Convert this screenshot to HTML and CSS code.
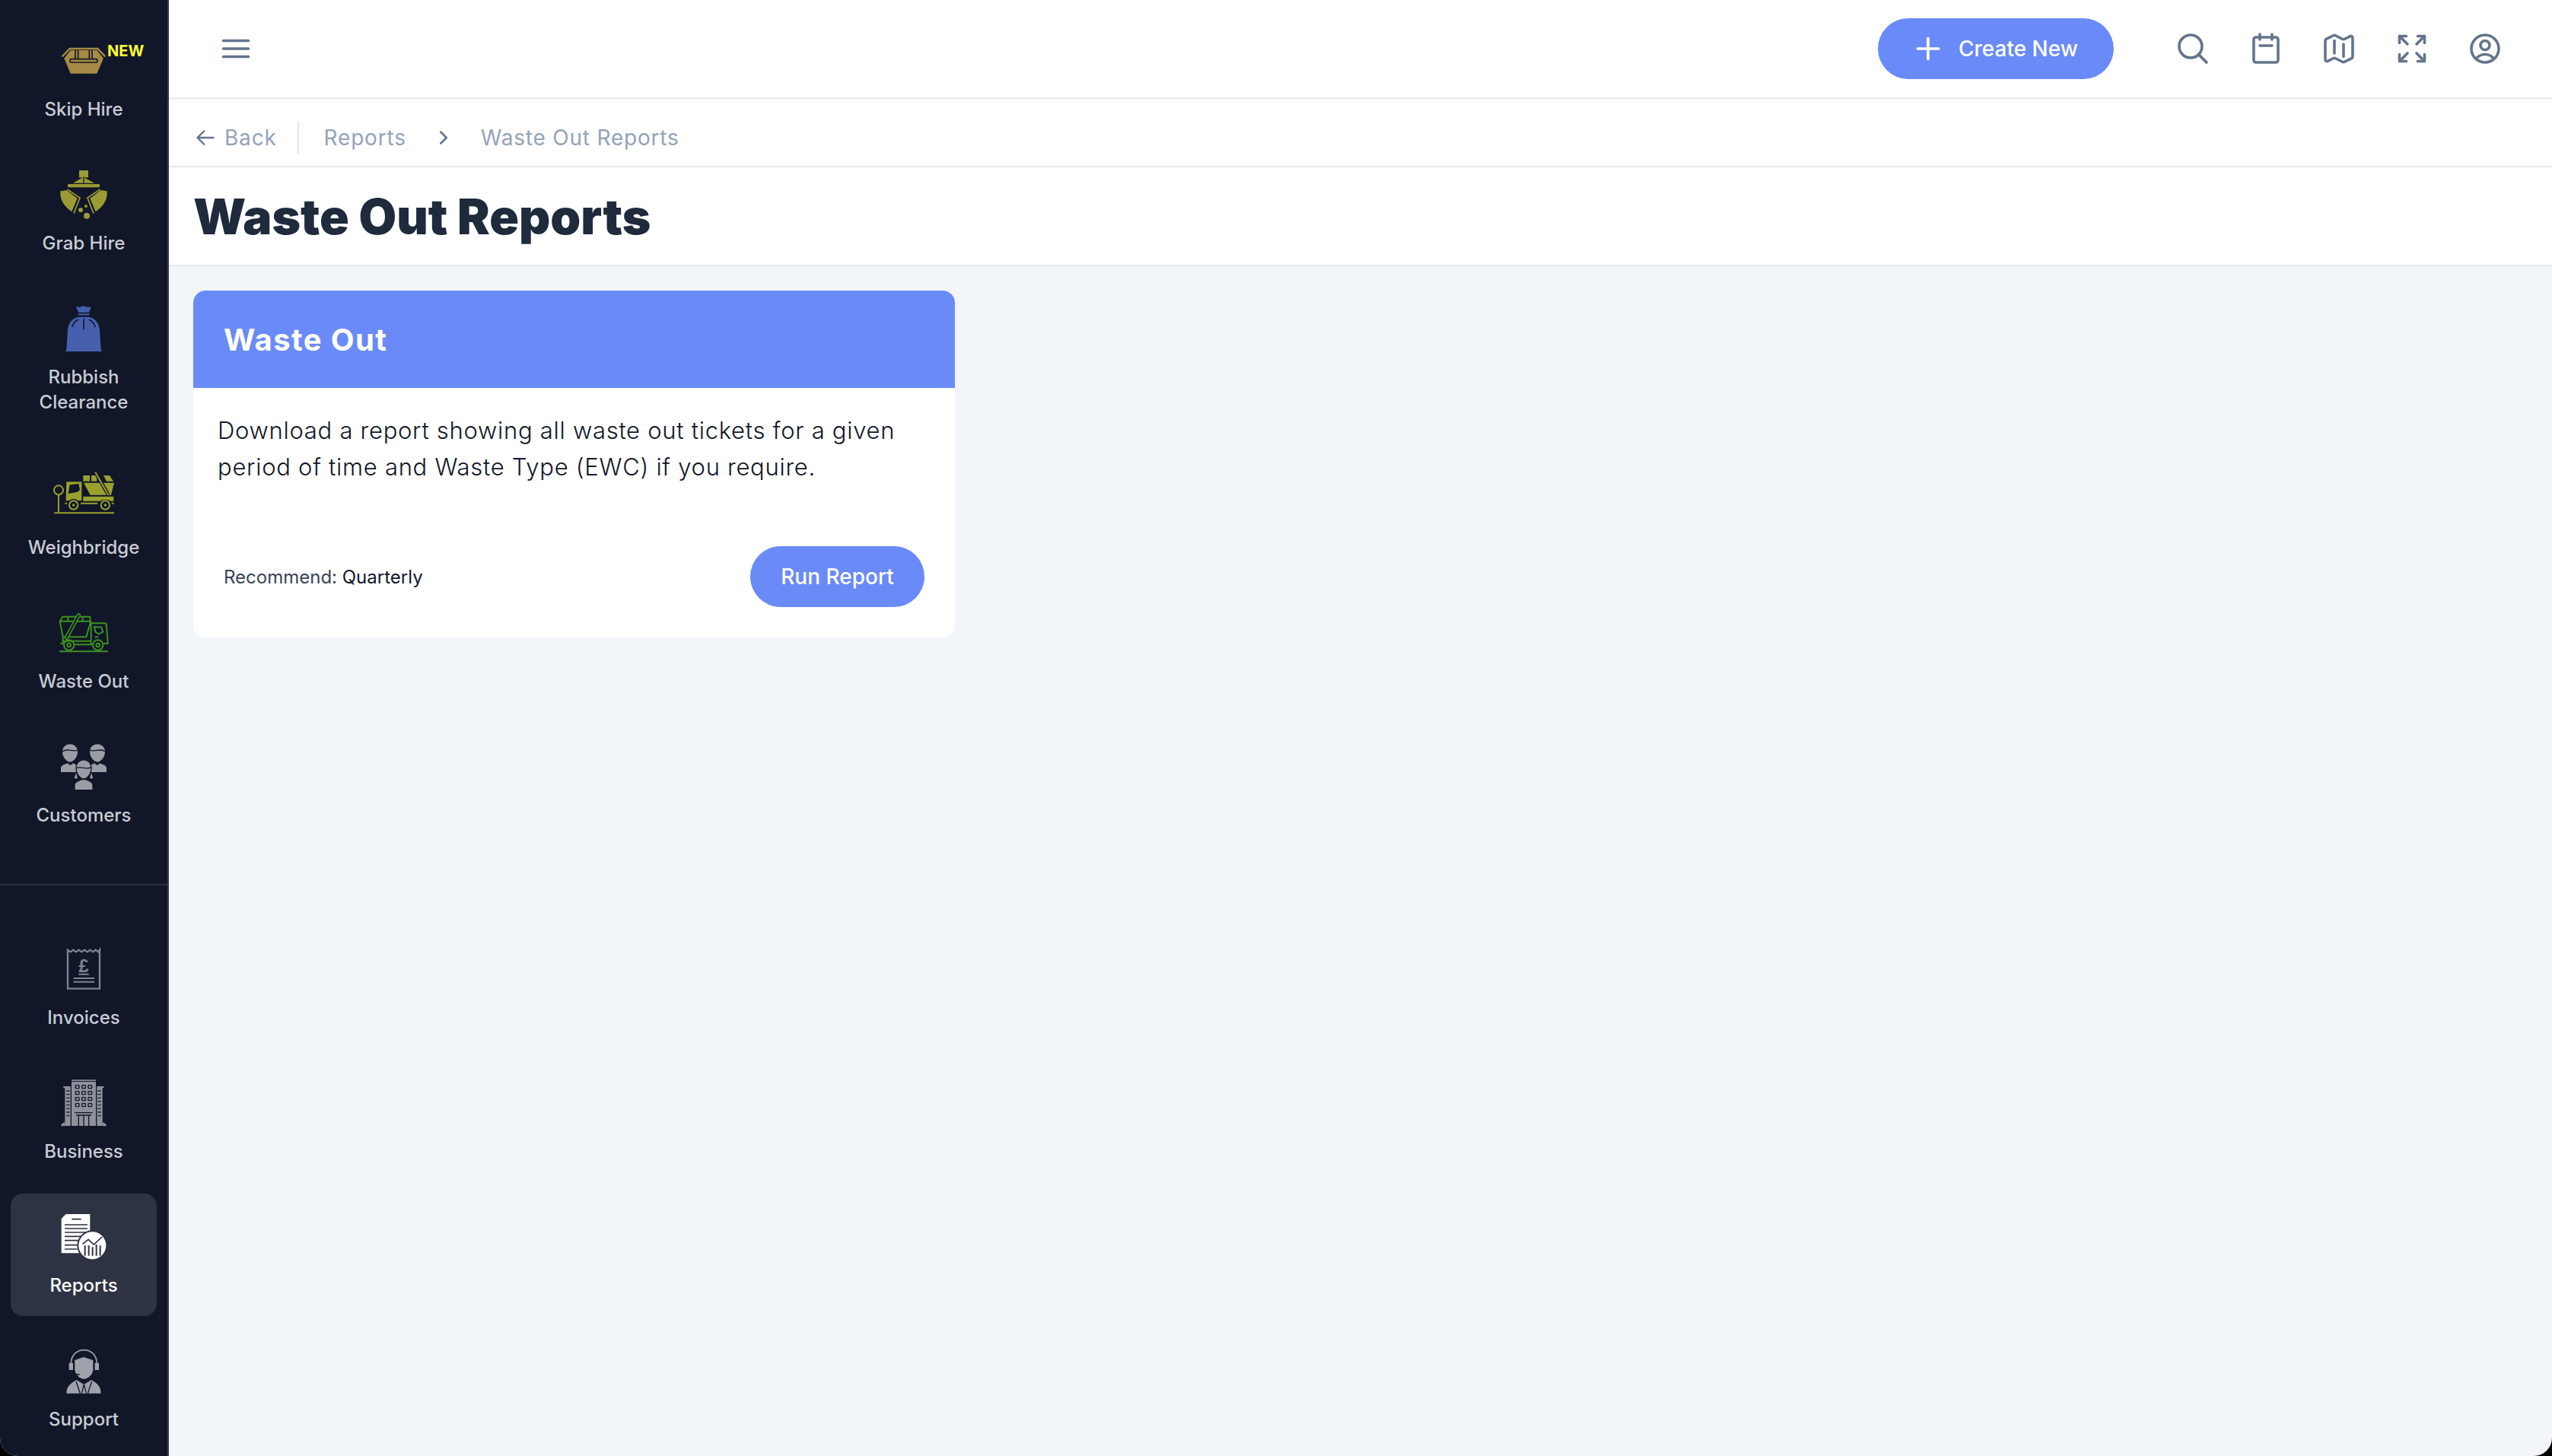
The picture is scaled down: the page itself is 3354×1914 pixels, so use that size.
FILE: index.html
```html
<!DOCTYPE html>
<html lang="en">
<head>
    <meta charset="UTF-8">
    <meta name="viewport" content="width=device-width, initial-scale=1.0">
    <title>Waste Out Reports</title>
    <link rel="stylesheet" href="styles.css">
</head>
<body>
    <div class="app">
        <aside class="sidebar">
            <nav class="nav-group nav-main">
                <a class="nav-item">
                    <span class="nav-badge">NEW</span>
                    <svg class="nav-icon" viewBox="60 18 240 264">
                        <path d="M95 133 L125 102 H235 L265 133" fill="none" stroke="#a68a45" stroke-width="7"/>
                        <path d="M128 108 H232 L258 140 L232 200 H128 L103 140 Z" fill="#a68a45"/>
                        <path d="M147 108 V142 M158 108 V142 M202 108 V142 M213 108 V142" stroke="#111729" stroke-width="5"/>
                        <rect x="126" y="143" width="108" height="13" rx="5" fill="#a68a45" stroke="#111729" stroke-width="5"/>
                    </svg>
                    <span class="nav-label">Skip Hire</span>
                </a>
                <a class="nav-item">
                    <svg class="nav-icon" viewBox="60 6 240 264">
                        <g fill="#9c9a34">
                            <rect x="162" y="42" width="36" height="28"/>
                            <path d="M138 92 L178 68 L222 92 Z"/>
                            <rect x="117" y="96" width="126" height="13" rx="4"/>
                            <path d="M88 124 L112 120 L155 152 L133 205 C105 185 85 160 88 124 Z"/>
                            <path d="M272 124 L248 120 L205 152 L227 205 C255 185 275 160 272 124 Z"/>
                            <circle cx="168" cy="198" r="9"/>
                            <circle cx="189" cy="183" r="6"/>
                            <circle cx="192" cy="221" r="12"/>
                        </g>
                        <path d="M180 68 V92" stroke="#111729" stroke-width="4"/>
                        <path d="M115 117 L165 150 L141 212 M245 117 L195 150 L219 212" fill="none" stroke="#9c9a34" stroke-width="5"/>
                    </svg>
                    <span class="nav-label">Grab Hire</span>
                </a>
                <a class="nav-item nav-item-tall">
                    <svg class="nav-icon" viewBox="60 -6 240 264">
                        <path d="M150 40 C160 42 170 42 178 36 C190 42 200 42 208 38 L206 50 L200 62 H160 L154 50 Z" fill="#4760ae"/>
                        <rect x="158" y="67" width="44" height="6" fill="#4760ae"/>
                        <path d="M160 80 H200 C225 84 240 104 243 130 L248 210 L252 216 H108 L112 210 L117 130 C120 104 135 84 160 80 Z" fill="#4760ae"/>
                        <path d="M180 88 V130 M160 90 C146 96 138 106 134 120 M200 90 C214 96 222 106 226 120" fill="none" stroke="#111729" stroke-width="5"/>
                    </svg>
                    <span class="nav-label">Rubbish<br>Clearance</span>
                </a>
                <a class="nav-item">
                    <svg class="nav-icon" viewBox="60 6 240 264">
                        <g fill="none" stroke="#9aa02c" stroke-width="6">
                            <circle cx="81" cy="103" r="18"/>
                            <path d="M81 121 V192 M64 193 H300 M168 155 H235"/>
                            <circle cx="140" cy="162" r="17"/>
                            <circle cx="265" cy="162" r="17"/>
                        </g>
                        <g fill="#9aa02c">
                            <circle cx="140" cy="162" r="5"/>
                            <circle cx="265" cy="162" r="5"/>
                            <rect x="106" y="152" width="8" height="6"/>
                            <rect x="290" y="152" width="9" height="6"/>
                            <path d="M112 70 H172 V144 H156 C150 136 130 136 124 144 H110 Z"/>
                            <rect x="178" y="45" width="26" height="23"/>
                            <rect x="210" y="45" width="22" height="23"/>
                            <path d="M258 45 H282 L297 68 H270 Z"/>
                            <path d="M180 74 H300 L288 122 H206 Z"/>
                            <path d="M178 128 H298 V146 H285 C278 138 252 138 245 146 H178 Z"/>
                        </g>
                        <path d="M125 82 L160 78 L165 102 L155 110 L119 117 Z" fill="#111729"/>
                        <path d="M226 32 L277 122" stroke="#111729" stroke-width="14"/>
                        <path d="M226 32 L277 122" stroke="#9aa02c" stroke-width="6"/>
                    </svg>
                    <span class="nav-label">Weighbridge</span>
                </a>
                <a class="nav-item">
                    <svg class="nav-icon" viewBox="60 -6 240 264">
                        <g fill="none" stroke="#3f8f1f" stroke-width="6">
                            <path d="M86 80 L97 62 H205 V78 M86 80 L98 142 H190 L208 80 Z"/>
                            <path d="M118 62 V80 M176 62 V80"/>
                            <path d="M206 88 H262 C268 88 270 92 270 98 L275 168 H256 M98 142 V172 M88 168 H100 M142 172 H216 M100 158 H210 M209 88 V172"/>
                            <path d="M222 102 L250 104 L256 122 L240 130 L226 122 Z"/>
                            <path d="M224 142 H238"/>
                            <circle cx="122" cy="174" r="20"/>
                            <circle cx="236" cy="174" r="20"/>
                            <circle cx="122" cy="174" r="7"/>
                            <circle cx="236" cy="174" r="7"/>
                            <path d="M84 199 H276"/>
                        </g>
                        <path d="M112 145 L160 56" stroke="#3f8f1f" stroke-width="16" stroke-linecap="round"/>
                        <path d="M112 145 L160 56" stroke="#111729" stroke-width="6" stroke-linecap="round"/>
                    </svg>
                    <span class="nav-label">Waste Out</span>
                </a>
                <a class="nav-item">
                    <svg class="nav-icon" viewBox="60 12 240 264">
                        <g fill="#9a9ca6">
                            <path d="M96 85 C96 45 156 45 156 85 C156 105 140 125 126 125 C112 125 96 105 96 85 Z"/>
                            <path d="M204 85 C204 45 264 45 264 85 C264 105 248 125 234 125 C220 125 204 105 204 85 Z"/>
                            <path d="M90 165 V150 C90 138 106 134 118 130 C122 140 132 140 136 130 L160 140 V165 Z"/>
                            <path d="M270 165 V150 C270 138 254 134 242 130 C238 140 228 140 224 130 L200 140 V165 Z"/>
                        </g>
                        <path d="M95 84 C115 68 135 88 157 78 M203 78 C225 88 245 68 265 84" fill="none" stroke="#111729" stroke-width="4"/>
                        <path d="M144 236 V215 C144 203 162 199 170 194 H190 C198 199 216 203 216 215 V236 Z" fill="#9a9ca6" stroke="#111729" stroke-width="4"/>
                        <path d="M150 150 C150 105 210 105 210 150 C210 172 194 192 180 192 C166 192 150 172 150 150 Z" fill="#9a9ca6" stroke="#111729" stroke-width="4"/>
                        <path d="M150 150 C168 138 190 158 210 146" fill="none" stroke="#111729" stroke-width="4"/>
                        <path d="M150 168 L143 190 H156 Z M210 168 L217 190 H204 Z" fill="#9a9ca6"/>
                    </svg>
                    <span class="nav-label">Customers</span>
                </a>
            </nav>
            <nav class="nav-group nav-lower">
                <a class="nav-item">
                    <svg class="nav-icon" viewBox="60 -30 240 264">
                        <path d="M117 26 L128 34 L139 26 L150 34 L161 26 L172 34 L183 26 L194 34 L205 26 L216 34 L227 26 L238 34 L243 26 V179 H117 Z" fill="none" stroke="#7f8290" stroke-width="7"/>
                        <text class="invoice-sign" x="180" y="114" text-anchor="middle">£</text>
                        <path d="M160 122 H200 M140 138 H222 M140 152 H222" stroke="#7f8290" stroke-width="6"/>
                    </svg>
                    <span class="nav-label">Invoices</span>
                </a>
                <a class="nav-item">
                    <svg class="nav-icon" viewBox="60 -12 240 264">
                        <g fill="#8e919b">
                            <rect x="132" y="28" width="96" height="5"/>
                            <rect x="100" y="54" width="160" height="6"/>
                            <rect x="106" y="60" width="148" height="150"/>
                            <path d="M90 211 C92 200 100 198 106 196 V211 Z M270 211 C268 200 260 198 254 196 V211 Z"/>
                            <rect x="132" y="36" width="96" height="24"/>
                        </g>
                        <path d="M130 36 V210 M230 36 V210" stroke="#111729" stroke-width="4"/>
                        <g fill="none" stroke="#111729" stroke-width="4">
                            <rect x="148" y="50" width="14" height="12" rx="2"/>
                            <rect x="173" y="50" width="14" height="12" rx="2"/>
                            <rect x="198" y="50" width="14" height="12" rx="2"/>
                            <rect x="148" y="74" width="14" height="12" rx="2"/>
                            <rect x="173" y="74" width="14" height="12" rx="2"/>
                            <rect x="198" y="74" width="14" height="12" rx="2"/>
                            <rect x="148" y="98" width="14" height="12" rx="2"/>
                            <rect x="173" y="98" width="14" height="12" rx="2"/>
                            <rect x="198" y="98" width="14" height="12" rx="2"/>
                            <rect x="148" y="122" width="14" height="12" rx="2"/>
                            <rect x="173" y="122" width="14" height="12" rx="2"/>
                            <rect x="198" y="122" width="14" height="12" rx="2"/>
                            <path d="M112 72 H124 M112 86 H124 M112 100 H124 M112 114 H124 M112 128 H124 M112 142 H124 M112 156 H124 M112 170 H124"/>
                            <path d="M236 72 H248 M236 86 H248 M236 100 H248 M236 114 H248 M236 128 H248 M236 142 H248 M236 156 H248 M236 170 H248"/>
                            <path d="M145 158 H215 M150 168 H210 M160 168 V210 M180 168 V210 M200 168 V210"/>
                        </g>
                    </svg>
                    <span class="nav-label">Business</span>
                </a>
                <a class="nav-item is-active">
                    <svg class="nav-icon" viewBox="60 6 240 264">
                        <path d="M92 66 L110 48 H205 V140 H165 V202 H92 Z" fill="#fff"/>
                        <path d="M133 68 H170 M105 90 H195 M105 105 H195 M105 120 H195 M105 136 H170 M105 152 H160 M105 170 H155 M105 186 H155" stroke="#2e3344" stroke-width="5"/>
                        <circle cx="214" cy="172" r="57" fill="#fff" stroke="#2e3344" stroke-width="6"/>
                        <path d="M185 172 V212 M200 172 V212 M215 178 V212 M230 168 V212 M245 172 V212" stroke="#2e3344" stroke-width="6"/>
                        <path d="M176 166 L198 148 L220 168 L252 138" fill="none" stroke="#2e3344" stroke-width="5"/>
                    </svg>
                    <span class="nav-label">Reports</span>
                </a>
                <a class="nav-item">
                    <svg class="nav-icon" viewBox="60 -6 240 264">
                        <path d="M130 98 C130 26 232 26 232 98" fill="none" stroke="#a0a2ab" stroke-width="5"/>
                        <rect x="122" y="95" width="16" height="28" fill="#a0a2ab"/>
                        <rect x="224" y="95" width="16" height="28" fill="#a0a2ab"/>
                        <path d="M145 84 L180 72 L217 84 V120 C217 140 198 158 181 158 C164 158 145 140 145 120 Z" fill="#a0a2ab"/>
                        <path d="M130 123 C134 136 146 142 166 140" fill="none" stroke="#111729" stroke-width="5"/>
                        <circle cx="170" cy="140" r="7" fill="#a0a2ab"/>
                        <path d="M112 215 C112 180 140 170 152 162 L181 180 L210 162 C222 170 248 180 248 215 Z" fill="#a0a2ab"/>
                        <path d="M150 168 L166 215 M212 168 L196 215 M181 180 L172 215 M181 180 L190 215" fill="none" stroke="#111729" stroke-width="4"/>
                    </svg>
                    <span class="nav-label">Support</span>
                </a>
            </nav>
        </aside>

        <main class="main">
            <header class="topbar">
                <svg class="top-icon" viewBox="0 0 24 24"><path d="M3.75 6.75h16.5M3.75 12h16.5m-16.5 5.25h16.5"/></svg>
                <div class="topbar-actions">
                    <button class="btn btn-create">
                        <svg class="plus-icon" viewBox="0 0 24 24"><path d="M12 4.5v15m7.5-7.5h-15"/></svg>
                        Create New
                    </button>
                    <div class="top-icons">
                        <svg class="top-icon" viewBox="0 0 24 24"><path d="M21 21l-5.197-5.197m0 0A7.5 7.5 0 105.196 5.196a7.5 7.5 0 0010.607 10.607z"/></svg>
                        <svg class="top-icon" viewBox="0 0 24 24"><path d="M8 2.5v3.5M16 2.5v3.5M5.5 4.5h13a1.5 1.5 0 011.5 1.5v13.5a1.5 1.5 0 01-1.5 1.5h-13A1.5 1.5 0 014 19.500V6a1.500 1.500 0 011.500-1.500zM8 10h8"/></svg>
                        <svg class="top-icon" viewBox="0 0 24 24"><path d="M9 6.75V15m6-6v8.25m.503 3.498l4.875-2.437c.381-.19.622-.58.622-1.006V4.82c0-.836-.88-1.38-1.628-1.006l-3.869 1.934c-.317.159-.69.159-1.006 0L9.503 3.252a1.125 1.125 0 00-1.006 0L3.622 5.689C3.24 5.88 3 6.27 3 6.695V19.18c0 .836.88 1.38 1.628 1.006l3.869-1.934c.317-.159.69-.159 1.006 0l4.994 2.497c.317.158.69.158 1.006 0z"/></svg>
                        <svg class="top-icon" viewBox="0 0 24 24"><path d="M3.75 3.75v4.5m0-4.5h4.5m-4.5 0L9 9M3.75 20.250v-4.500m0 4.500h4.500m-4.500 0L9 15M20.250 3.750h-4.500m4.500 0v4.500m0-4.500L15 9m5.250 11.250h-4.500m4.500 0v-4.500m0 4.500L15 15"/></svg>
                        <svg class="top-icon" viewBox="0 0 24 24"><path d="M17.982 18.725A7.488 7.488 0 0012 15.75a7.488 7.488 0 00-5.982 2.975m11.963 0a9 9 0 10-11.963 0m11.963 0A8.966 8.966 0 0112 21a8.966 8.966 0 01-5.982-2.275M15 9.75a3 3 0 11-6 0 3 3 0 016 0z"/></svg>
                    </div>
                </div>
            </header>

            <div class="crumbs">
                <svg class="crumb-arrow" viewBox="0 0 24 24"><path d="M10.5 19.5L3 12m0 0l7.500-7.500M3 12h18"/></svg>
                <span class="crumb-back">Back</span>
                <span class="crumb-divider"></span>
                <span class="crumb">Reports</span>
                <svg class="crumb-chevron" viewBox="0 0 24 24"><path d="M8.250 4.500l7.500 7.500-7.500 7.500"/></svg>
                <span class="crumb">Waste Out Reports</span>
            </div>

            <div class="title-bar">
                <h1>Waste Out Reports</h1>
            </div>

            <section class="content">
                <article class="report-card">
                    <h2 class="report-head">Waste Out</h2>
                    <p class="report-text">Download a report showing all waste out tickets for a given period of time and Waste Type (EWC) if you require.</p>
                    <div class="report-foot">
                        <span class="report-note">Recommend: <span class="report-freq">Quarterly</span></span>
                        <button class="btn btn-run">Run Report</button>
                    </div>
                </article>
            </section>
        </main>
    </div>
</body>
</html>
```

FILE: styles.css
```css
* {
    margin: 0;
    padding: 0;
    box-sizing: border-box;
}

body {
    font-family: Inter, "Noto Sans", Arial, sans-serif;
    background-color: #000;
    height: 100vh;
    overflow: hidden;
}

.app {
    display: flex;
    height: 100%;
    border-radius: 0 0 24px 24px;
    overflow: hidden;
    background-color: #f2f5fa;
}

/* sidebar */
.sidebar {
    width: 222px;
    flex-shrink: 0;
    background-color: #111729;
    border-right: 2px solid #3a3f50;
}

.nav-group {
    display: flex;
    flex-direction: column;
    align-items: center;
}

.nav-main {
    padding-top: 23px;
    height: 1164px;
    border-bottom: 2px solid #2b3040;
}

.nav-lower {
    padding-top: 53px;
}

.nav-item {
    position: relative;
    display: flex;
    flex-direction: column;
    align-items: center;
    width: 192px;
    height: 161px;
    margin-bottom: 15px;
    padding-top: 13px;
    border-radius: 16px;
    color: #c9ccd4;
    flex-shrink: 0;
}

.nav-item-tall {
    height: 209px;
}

.nav-item.is-active {
    background-color: #2e3344;
    color: #fff;
}

.nav-icon {
    display: block;
    width: 80px;
    height: 88px;
    overflow: visible;
}

.nav-label {
    display: block;
    margin-top: 3px;
    font-size: 24px;
    font-weight: 500;
    line-height: 33px;
    text-align: center;
}

.nav-badge {
    position: absolute;
    left: 127px;
    top: 32px;
    font-size: 20px;
    line-height: 24px;
    font-weight: 700;
    color: #ffff33;
}

.invoice-sign {
    font-family: "Liberation Sans", Arial, sans-serif;
    font-size: 72px;
    font-weight: 700;
    fill: #7f8290;
}

/* main column */
.main {
    flex: 1;
    display: flex;
    flex-direction: column;
    min-width: 0;
}

.topbar {
    display: flex;
    align-items: center;
    justify-content: space-between;
    height: 130px;
    padding-left: 64px;
    padding-right: 64px;
    background-color: #fff;
    border-bottom: 2px solid #e8e9ec;
    box-shadow: 0 2px 4px rgba(0, 0, 0, 0.04);
    position: relative;
}

.topbar-actions {
    display: flex;
    align-items: center;
    gap: 80px;
}

.top-icons {
    display: flex;
    gap: 48px;
}

.top-icon {
    display: block;
    width: 48px;
    height: 48px;
    fill: none;
    stroke: #64748b;
    stroke-width: 1.8;
    stroke-linecap: round;
    stroke-linejoin: round;
}

.btn {
    display: inline-flex;
    align-items: center;
    height: 80px;
    border: none;
    border-radius: 40px;
    background-color: #6a8bf7;
    color: #fff;
    font-family: inherit;
    font-size: 28px;
    font-weight: 500;
    cursor: pointer;
}

.btn-create {
    width: 310px;
    padding-left: 44px;
    gap: 18px;
}

.plus-icon {
    width: 44px;
    height: 44px;
    fill: none;
    stroke: #fff;
    stroke-width: 2;
    stroke-linecap: round;
}

/* breadcrumb */
.crumbs {
    display: flex;
    align-items: center;
    height: 90px;
    padding-left: 34px;
    padding-top: 14px;
    background-color: #fff;
    border-bottom: 2px solid #e3e7ee;
    font-size: 28px;
    letter-spacing: 0.8px;
    color: #94a3b8;
}

.crumb-arrow {
    width: 28px;
    height: 28px;
    margin-right: 11px;
    fill: none;
    stroke: #64748b;
    stroke-width: 2;
    stroke-linecap: round;
    stroke-linejoin: round;
}

.crumb-divider {
    width: 2px;
    height: 42px;
    margin: 0 33px 0 27px;
    background-color: #e3e7ee;
}

.crumb-chevron {
    width: 24px;
    height: 24px;
    margin: 0 37px;
    fill: none;
    stroke: #64748b;
    stroke-width: 2.5;
    stroke-linecap: round;
    stroke-linejoin: round;
}

.title-bar {
    display: flex;
    align-items: center;
    height: 130px;
    padding-left: 32px;
    background-color: #fff;
    border-bottom: 2px solid #e3e7ee;
}

h1 {
    font-size: 64px;
    font-weight: 900;
    color: #1f2a3c;
}

/* report cards */
.content {
    display: grid;
    grid-template-columns: 1001px;
    padding: 32px;
}

.report-card {
    background-color: #fff;
    border-radius: 16px;
    overflow: hidden;
}

.report-head {
    display: flex;
    align-items: center;
    height: 128px;
    padding-left: 40px;
    background-color: #6a8bf7;
    color: #fff;
    font-size: 40px;
    font-weight: 700;
    letter-spacing: 1.4px;
}

.report-text {
    padding: 32px 32px 80px;
    font-size: 31px;
    font-weight: 300;
    letter-spacing: 0.72px;
    line-height: 48px;
    color: #111729;
}

.report-foot {
    display: flex;
    align-items: center;
    justify-content: space-between;
    padding: 0 40px 40px;
}

.report-note {
    font-size: 24px;
    color: #3a4456;
}

.report-freq {
    color: #111729;
}

.btn-run {
    width: 229px;
    justify-content: center;
}
```
